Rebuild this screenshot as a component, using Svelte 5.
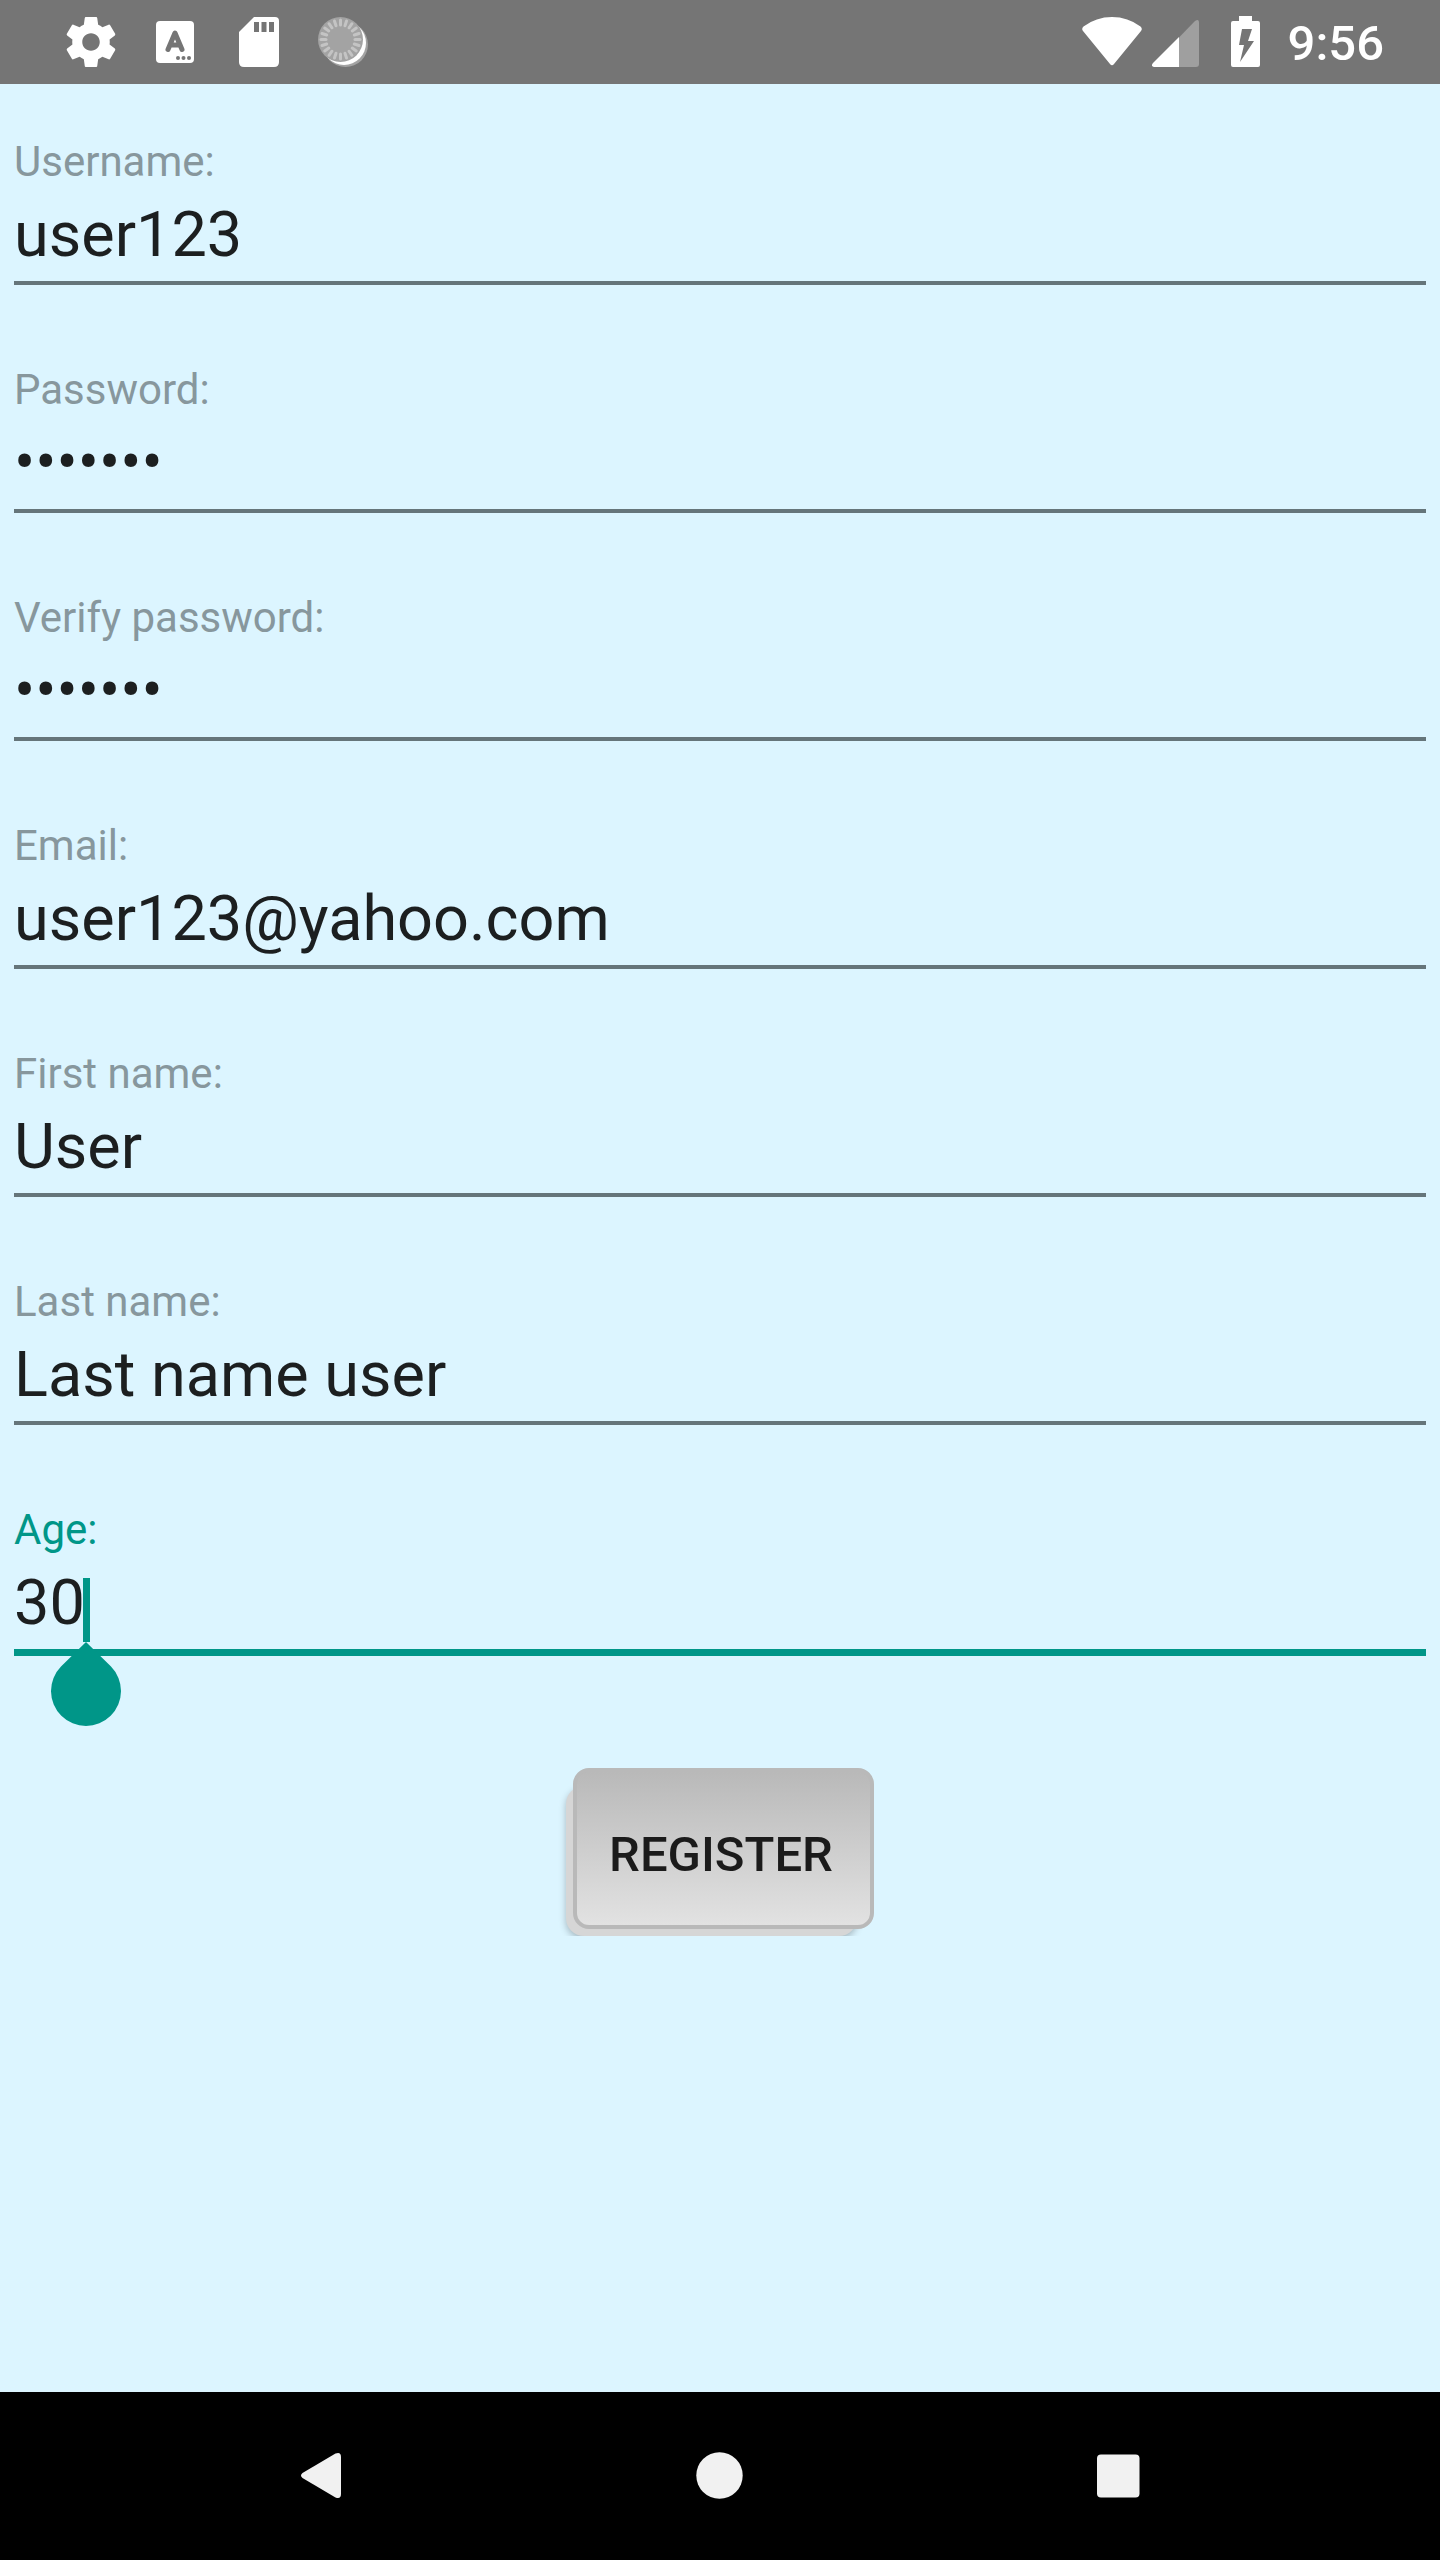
<script>
  let fields = $state([
    { id: 'username', label: 'Username:', type: 'text', value: 'user123' },
    { id: 'password', label: 'Password:', type: 'password', value: 'user123' },
    { id: 'verify', label: 'Verify password:', type: 'password', value: 'user123' },
    { id: 'email', label: 'Email:', type: 'email', value: 'user123@yahoo.com' },
    { id: 'first', label: 'First name:', type: 'text', value: 'User' },
    { id: 'last', label: 'Last name:', type: 'text', value: 'Last name user' },
    { id: 'age', label: 'Age:', type: 'text', value: '30', active: true }
  ]);

  const ticks = Array.from({ length: 20 }, (_, i) => i * 18);
</script>

<div class="screen">
  <header class="status">
    <div class="notifications">
      <svg viewBox="0 0 24 24" class="icon" aria-hidden="true">
        <path fill="#fff" d="M19.43 12.98c.04-.32.07-.64.07-.98s-.03-.66-.07-.98l2.11-1.65c.19-.15.24-.42.12-.64l-2-3.46c-.12-.22-.39-.3-.61-.22l-2.49 1c-.52-.4-1.08-.73-1.69-.98l-.38-2.65C14.46 2.18 14.25 2 14 2h-4c-.25 0-.46.18-.49.42l-.38 2.65c-.61.25-1.17.59-1.69.98l-2.49-1c-.23-.09-.49 0-.61.22l-2 3.46c-.13.22-.07.49.12.64l2.11 1.65c-.04.32-.07.65-.07.98s.03.66.07.98l-2.11 1.65c-.19.15-.24.42-.12.64l2 3.46c.12.22.39.3.61.22l2.49-1c.52.4 1.08.73 1.69.98l.38 2.65c.03.24.24.42.49.42h4c.25 0 .46-.18.49-.42l.38-2.65c.61-.25 1.17-.59 1.69-.98l2.49 1c.23.09.49 0 .61-.22l2-3.46c.12-.22.07-.49-.12-.64l-2.11-1.65zM12 15.5c-1.93 0-3.5-1.57-3.5-3.5s1.57-3.5 3.5-3.5 3.5 1.57 3.5 3.5-1.57 3.5-3.5 3.5z" />
      </svg>
      <svg viewBox="0 0 60 60" class="icon" aria-hidden="true">
        <rect x="11" y="9" width="38" height="42" rx="4" fill="#fff" />
        <path d="M23 37.500 L30 21 L37 37.500 M25.500 33 H34.500" fill="none" stroke="#757575" stroke-width="5" stroke-linecap="round" stroke-linejoin="round" />
        <circle cx="33" cy="46" r="2" fill="#757575" />
        <circle cx="38.500" cy="46" r="2" fill="#757575" />
        <circle cx="44" cy="46" r="2" fill="#757575" />
      </svg>
      <svg viewBox="0 0 60 60" class="icon" aria-hidden="true">
        <path fill="#fff" d="M25 5 H46 Q50 5 50 9 V50 Q50 55 45 55 H15 Q10 55 10 50 V20 Z" />
        <path fill="#757575" d="M25 10h5v10h-5z M32.500 10h5v10h-5z M40 10h5v10h-5z" />
      </svg>
      <svg viewBox="0 0 60 60" class="icon" aria-hidden="true">
        <circle cx="32.500" cy="32.500" r="22.500" fill="#a3a3a3" />
        <circle cx="31" cy="31" r="22" fill="#fff" />
        <circle cx="27.500" cy="27.500" r="22.500" fill="#a3a3a3" />
        {#each ticks as angle}
          <path d="M27.500 8 V13" stroke="#c4c4c4" stroke-width="3" stroke-linecap="round" transform="rotate({angle} 27.5 27.5)" />
        {/each}
      </svg>
    </div>
    <div class="system">
      <svg viewBox="0 0 60 60" width="60" height="60" aria-hidden="true">
        <path fill="#fff" d="M1.500 14.500 Q14 5 30 5 Q46 5 58.500 14.500 Q60.800 16.500 59 19 L32 52 Q30 54.500 28 52 L1 19 Q-0.800 16.500 1.500 14.500 Z" />
      </svg>
      <svg class="signal" viewBox="0 0 47 60" width="47" height="60" aria-hidden="true">
        <path fill="#9f9f9f" d="M27 25.500 L43 9 Q47 6 47 11 V52 Q47 55 44 55 H27 Z" />
        <path fill="#fff" d="M27 25 V55 H2 Q-1.500 54 1 51 Z" />
      </svg>
      <svg class="battery" viewBox="0 0 29 60" width="29" height="60" aria-hidden="true">
        <path fill="#fff" d="M8 4h13v5h6q2 0 2 2v42q0 2-2 2H2q-2 0-2-2V11q0-2 2-2h6z" />
        <path fill="#757575" d="M11 17H21L17 29H23L9 50L13 33H8Z" />
      </svg>
      <time>9:56</time>
    </div>
  </header>

  <main>
    <form onsubmit={(e) => e.preventDefault()}>
      {#each fields as field}
        <div class="field" class:active={field.active}>
          <label for={field.id}>{field.label}</label>
          <input id={field.id} type={field.type} bind:value={field.value} autocomplete="off" />
          {#if field.active}
            <span class="caret"></span>
            <svg class="handle" viewBox="0 0 70 84" aria-hidden="true">
              <path fill="#009688" d="M35 0 L60 24.500 A35 35 0 1 1 10 24.500 Z" />
            </svg>
          {/if}
        </div>
      {/each}
      <button class="register" type="submit"><span>REGISTER</span></button>
    </form>
  </main>

  <nav>
    <button type="button" aria-label="Back">
      <svg viewBox="0 0 60 60" class="icon"><path fill="#f1f1f1" d="M10.500 27 L43.500 7.500 Q49 5.500 49 11 V48 Q49 53.500 43.500 51.500 L10.500 32 Q7.500 29.500 10.500 27 Z" /></svg>
    </button>
    <button type="button" aria-label="Home">
      <svg viewBox="0 0 60 60" class="icon"><circle cx="29.500" cy="29.500" r="23.200" fill="#f1f1f1" /></svg>
    </button>
    <button type="button" aria-label="Recent apps">
      <svg viewBox="0 0 60 60" class="icon"><rect x="9" y="8.500" width="42.500" height="43" rx="4" fill="#f1f1f1" /></svg>
    </button>
  </nav>
</div>

<style>
  :global(body) {
    background: #dcf5ff;
  }

  .screen {
    display: flex;
    flex-direction: column;
    min-height: 100vh;
    font-family: Roboto, sans-serif;
    background: #dcf5ff;
  }

  svg {
    display: block;
    flex: none;
  }

  .icon {
    width: 60px;
    height: 60px;
  }

  .status {
    display: flex;
    align-items: center;
    justify-content: space-between;
    height: 84px;
    padding: 0 56px 0 61px;
    background: #757575;
  }

  .notifications {
    display: flex;
    gap: 24px;
  }

  .system {
    display: flex;
    align-items: center;
  }

  .signal {
    margin-left: 10px;
  }

  .battery {
    margin-left: 32px;
  }

  time {
    margin-left: 28px;
    padding-top: 4px;
    color: #fff;
    font-size: 49px;
    font-weight: 500;
    line-height: 56px;
  }

  main {
    flex: 1;
    padding: 53px 14px 60px;
  }

  form {
    display: flex;
    flex-direction: column;
    gap: 80px;
  }

  .field {
    position: relative;
    display: flex;
    flex-direction: column;
    gap: 10px;
  }

  label {
    color: #87979d;
    font-size: 42px;
    line-height: 50px;
  }

  input {
    box-sizing: border-box;
    width: 100%;
    height: 88px;
    margin: 0;
    padding: 0 0 10px;
    border: 0;
    border-bottom: 4px solid #65757a;
    border-radius: 0;
    outline: 0;
    background: transparent;
    color: #1c1f20;
    font-family: inherit;
    font-size: 63px;
    line-height: 74px;
  }

  .active label {
    color: #009688;
  }

  .active input {
    height: 91px;
    border-bottom: 7px solid #009688;
    caret-color: #009688;
  }

  .caret {
    position: absolute;
    left: 69px;
    bottom: 14px;
    width: 7px;
    height: 64px;
    background: #009688;
  }

  .handle {
    position: absolute;
    left: 37px;
    top: 137px;
    width: 70px;
    height: 84px;
  }

  .register {
    position: relative;
    align-self: center;
    width: 310px;
    height: 168px;
    margin-top: 32px;
    padding: 5px 0 0 2px;
    border: 0;
    background: transparent;
    color: #1b1b1b;
    font-family: inherit;
    font-size: 49px;
    font-weight: 500;
    line-height: 58px;
    clip-path: inset(0 -20px);
  }

  .register::before {
    content: '';
    position: absolute;
    inset: 18px 18px 0 1px;
    border-radius: 18px;
    background: #d6d6d6;
    box-shadow: 0 3px 7px rgba(0, 0, 0, 0.25);
  }

  .register::after {
    content: '';
    position: absolute;
    inset: 0 1px 7px 8px;
    border: 4px solid #b9b9b9;
    border-radius: 16px;
    background: linear-gradient(#b9b9b9, #e2e2e2);
  }

  .register span {
    position: relative;
    z-index: 1;
  }

  nav {
    display: flex;
    justify-content: center;
    height: 168px;
    background: #000;
  }

  nav button {
    display: flex;
    flex: 0 1 398px;
    align-items: center;
    justify-content: center;
    padding: 0;
    border: 0;
    background: transparent;
  }
</style>
